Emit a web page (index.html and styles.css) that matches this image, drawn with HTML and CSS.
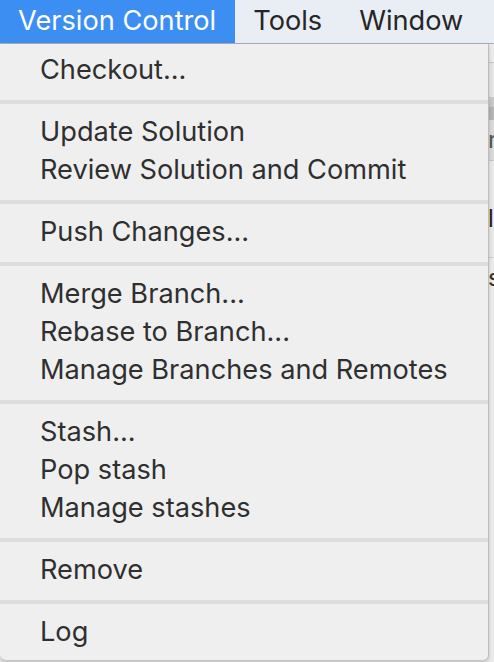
FILE: index.html
```html
<!DOCTYPE html>
<html lang="en">
<head>
<meta charset="utf-8">
<title>Version Control menu</title>
<link rel="stylesheet" href="styles.css">
</head>
<body>
<nav class="menubar">
  <div class="menubar-item active">Version Control</div>
  <div class="menubar-item">Tools</div>
  <div class="menubar-item">Window</div>
</nav>
<main class="workspace">
  <div class="window">
    <div class="wrow r1"></div>
    <div class="wrow r2"></div>
    <div class="wrow r3"></div>
    <div class="wrow r4"></div>
    <div class="wrow r5"><span>r</span></div>
    <div class="wrow r6"><span>l</span></div>
    <div class="wrow r7"><span>s</span></div>
  </div>
  <ul class="menu">
    <li class="section">
      <div class="item">Checkout...</div>
    </li>
    <li class="section">
      <div class="item">Update Solution</div>
      <div class="item">Review Solution and Commit</div>
    </li>
    <li class="section">
      <div class="item">Push Changes...</div>
    </li>
    <li class="section">
      <div class="item">Merge Branch...</div>
      <div class="item">Rebase to Branch...</div>
      <div class="item">Manage Branches and Remotes</div>
    </li>
    <li class="section">
      <div class="item">Stash...</div>
      <div class="item">Pop stash</div>
      <div class="item">Manage stashes</div>
    </li>
    <li class="section">
      <div class="item">Remove</div>
    </li>
    <li class="section">
      <div class="item">Log</div>
    </li>
  </ul>
</main>
</body>
</html>
```
FILE: styles.css
```css
* { box-sizing: border-box; }
html, body {
  margin: 0;
  padding: 0;
  width: 494px;
  height: 662px;
  overflow: hidden;
}
body {
  font-family: Inter, "Liberation Sans", sans-serif;
  background: #e9e9e9;
  color: #2e2e2e;
}
.menubar {
  display: flex;
  height: 44px;
  background: #e9eef5;
  border-bottom: 1px solid #a7aeb8;
}
.menubar-item {
  padding: 0 19px 0 18px;
  font-size: 27.2px;
  line-height: 42px;
  color: #262626;
}
.menubar-item.active {
  background: #3d8ef2;
  color: #ffffff;
}
.workspace {
  position: relative;
  height: 618px;
}
.window {
  display: flex;
  flex-direction: column;
  height: 100%;
  background: #e8e8e8;
}
.wrow {
  padding-left: 488px;
  overflow: hidden;
  white-space: nowrap;
  font-size: 24px;
  color: #333;
}
.r1 { height: 19px; background: #ececec; border-bottom: 1px solid #c6c6c6; }
.r2 { height: 34px; background: #e6e6e6; }
.r3 { height: 10px; background: #c9c9c9; }
.r4 { height: 13px; background: #b4b4b4; }
.r5 { height: 41px; background: #dadada; border-bottom: 1px solid #c8c8c8; line-height: 40px; color: #555; }
.r6 { height: 97px; background: #e9e9e9; border-bottom: 1px solid #cfcfcf; line-height: 116px; color: #2a2016; }
.r7 { flex: 1; background: #ececec; line-height: 40px; }
.menu {
  position: absolute;
  top: 0;
  left: 0;
  width: 489px;
  margin: 0;
  padding: 8px 0;
  list-style: none;
  background: #efeff0;
  border-right: 1px solid #bdbdbd;
  border-bottom: 1px solid #c4c4c4;
  border-radius: 0 0 6px 6px;
  box-shadow: 0 2px 4px rgba(0, 0, 0, 0.18);
}
.section {
  padding: 0;
}
.section + .section {
  border-top: 4px solid #dddddd;
  margin-top: 10px;
  padding-top: 10px;
}
.item {
  height: 38px;
  line-height: 36px;
  padding-left: 40px;
  font-size: 27.2px;
  color: #2f2f2f;
  white-space: nowrap;
}
```
